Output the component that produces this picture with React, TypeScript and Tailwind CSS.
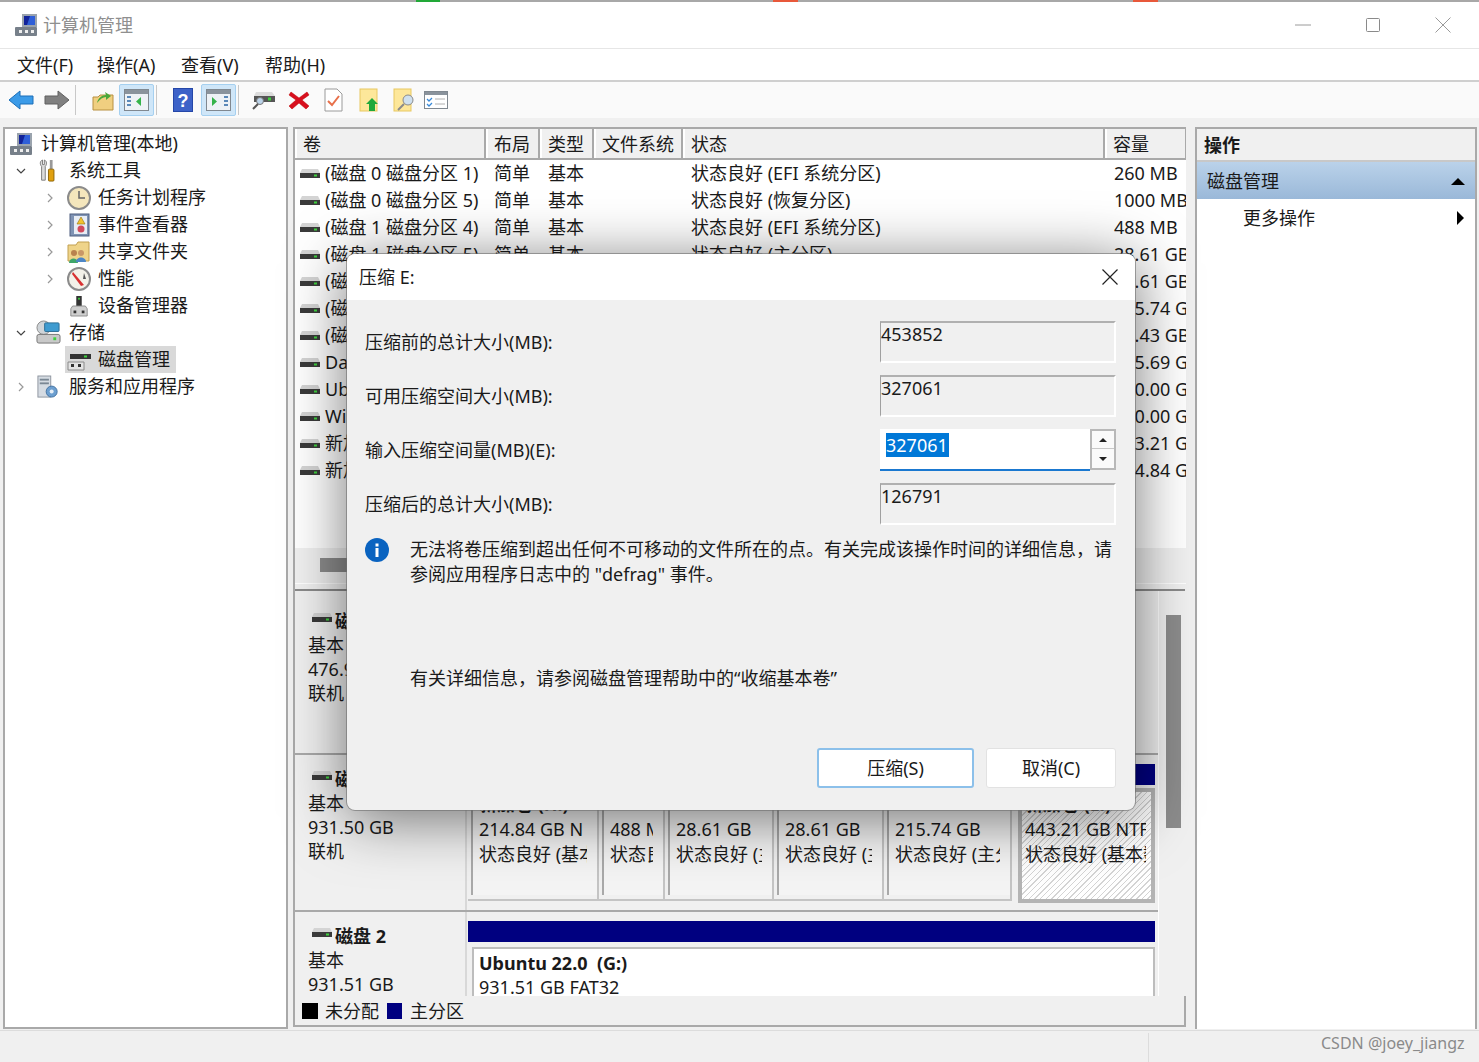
import type { ReactNode } from 'react';

const rows = [
  ['(磁盘 0 磁盘分区 1)', '状态良好 (EFI 系统分区)', '260 MB'],
  ['(磁盘 0 磁盘分区 5)', '状态良好 (恢复分区)', '1000 MB'],
  ['(磁盘 1 磁盘分区 4)', '状态良好 (EFI 系统分区)', '488 MB'],
  ['(磁盘 1 磁盘分区 5)', '状态良好 (主分区)', '28.61 GB'],
  ['(磁盘 1 磁盘分区 6)', '状态良好 (主分区)', '28.61 GB'],
  ['(磁盘 1 磁盘分区 7)', '状态良好 (主分区)', '215.74 GB'],
  ['(磁盘 0 磁盘分区 6)', '状态良好 (主分区)', '21.43 GB'],
  ['Data (D:)', '状态良好 (基本数据分区)', '175.69 GB'],
  ['Ubuntu 22.0 (G:)', '状态良好 (主分区)', '100.00 GB'],
  ['Windows (C:)', '状态良好 (启动)', '300.00 GB'],
  ['新加卷 (E:)', '状态良好 (基本数据分区)', '443.21 GB'],
  ['新加卷 (H:)', '状态良好 (基本数据分区)', '214.84 GB'],
];

const parts = [
  { w: 'w-[131px]', cap: '214.84 GB N', st: '状态良好 (基本', name: '新加卷 (H:)' },
  { w: 'w-[66px]', cap: '488 MB', st: '状态良好', name: '' },
  { w: 'w-[109px]', cap: '28.61 GB', st: '状态良好 (主', name: '' },
  { w: 'w-[110px]', cap: '28.61 GB', st: '状态良好 (主', name: '' },
  { w: 'w-[128px]', cap: '215.74 GB', st: '状态良好 (主分', name: '' },
];

function DiskIcon({ className = '' }: { className?: string }) {
  return (
    <svg viewBox="0 0 20 10" className={`w-[20px] h-[10px] shrink-0 ${className}`}>
      <path d="M2 0h16l2 4H0z" fill="#d4d4d4" />
      <rect x="0" y="4" width="20" height="5" fill="#3a3a3a" />
      <rect x="14" y="5.5" width="3" height="2" fill="#3fd13f" />
    </svg>
  );
}

function Chevron({ open }: { open?: boolean }) {
  return (
    <svg viewBox="0 0 10 10" className="w-[10px] h-[10px]" fill="none" stroke={open ? '#444' : '#999'} strokeWidth="1.2">
      <path d={open ? 'M1 3l4 4 4-4' : 'M3 1l4 4-4 4'} />
    </svg>
  );
}

function ComputerIcon() {
  return (
    <svg viewBox="0 0 24 24" className="w-[24px] h-[24px]">
      <rect x="8" y="1" width="15" height="13" fill="#9aa3ad" />
      <rect x="10" y="3" width="11" height="9" fill="#2f5fd8" />
      <path d="M10 3h6l-3 9h-3z" fill="#12239a" />
      <rect x="1" y="14" width="22" height="9" rx="1" fill="#77808a" />
      <rect x="5" y="17" width="3" height="3" fill="#eee" />
      <rect x="11" y="17" width="3" height="3" fill="#eee" />
      <rect x="17" y="17" width="3" height="3" fill="#eee" />
    </svg>
  );
}

const treeIcons: Record<string, ReactNode> = {
  tools: (
    <svg viewBox="0 0 24 26" className="w-[22px] h-[24px]">
      <path d="M6 1C3 2 3 6 5 8v15h4V8c2-2 2-6-1-7v5H6z" fill="#dcdcdc" stroke="#777" />
      <rect x="14" y="1" width="3" height="10" fill="#999" />
      <rect x="12.5" y="11" width="6" height="13" rx="1" fill="#e0a010" stroke="#8a6000" />
    </svg>
  ),
  clock: (
    <svg viewBox="0 0 24 24" className="w-[24px] h-[24px]">
      <circle cx="12" cy="12" r="11" fill="#f4e6bc" stroke="#8b8b8b" strokeWidth="2" />
      <path d="M12 5v7h6" fill="none" stroke="#666" strokeWidth="1.5" />
    </svg>
  ),
  log: (
    <svg viewBox="0 0 24 24" className="w-[24px] h-[24px]">
      <rect x="3" y="1" width="19" height="22" fill="#7f93b4" stroke="#4f5f80" />
      <rect x="7" y="3" width="13" height="18" fill="#e8edf5" />
      <path d="M14 4l4 7h-8z" fill="#f2c230" stroke="#94720c" strokeWidth=".6" />
      <circle cx="14" cy="16" r="3.5" fill="#d24a5c" />
    </svg>
  ),
  share: (
    <svg viewBox="0 0 24 24" className="w-[24px] h-[24px]">
      <path d="M1 5h8l2-3h11v19H1z" fill="#efd48a" stroke="#c2a050" />
      <circle cx="7" cy="13" r="3" fill="#b9824e" />
      <path d="M2 23c0-6 9-6 9 0z" fill="#3fa66a" />
      <circle cx="14" cy="13" r="3" fill="#c99767" />
      <path d="M9 22c0-6 10-6 10 0z" fill="#4d86c6" />
    </svg>
  ),
  perf: (
    <svg viewBox="0 0 24 24" className="w-[24px] h-[24px]">
      <circle cx="12" cy="12" r="11" fill="#f3f1e8" stroke="#8b8b8b" strokeWidth="2" />
      <path d="M6 5l11 13-3 1L5 7z" fill="#d83030" />
      <path d="M17 6l2 6h-3z" fill="#555" />
    </svg>
  ),
  device: (
    <svg viewBox="0 0 22 24" className="w-[20px] h-[22px]">
      <rect x="8" y="1" width="6" height="11" fill="#333" />
      <rect x="10" y="3" width="2" height="2" fill="#3fd13f" />
      <path d="M4 12h14l2 3v8H2v-8z" fill="#cfcfcf" stroke="#8a8a8a" />
      <rect x="5" y="17" width="3" height="3" fill="#333" />
      <rect x="14" y="17" width="3" height="3" fill="#333" />
    </svg>
  ),
  storage: (
    <svg viewBox="0 0 26 26" className="w-[25px] h-[25px]">
      <circle cx="8" cy="8" r="7" fill="#cfd4d8" stroke="#8a8a8a" />
      <rect x="9" y="3" width="15" height="9" rx="1" fill="#3e9bd0" stroke="#2b6c94" />
      <rect x="1" y="15" width="24" height="9" rx="2" fill="#c9c9c9" stroke="#777" />
      <rect x="18" y="18" width="3" height="3" fill="#3fd13f" />
    </svg>
  ),
  disk: (
    <svg viewBox="0 0 24 22" className="w-[24px] h-[22px]">
      <path d="M5 0h17l2 5H3z" fill="#d6d6d6" />
      <rect x="3" y="5" width="21" height="5" fill="#333" />
      <rect x="17" y="6.5" width="3" height="2" fill="#3fd13f" />
      <path d="M1 13h16v8H1z" fill="#e4e4e4" stroke="#8a8a8a" />
      <rect x="4" y="15" width="3" height="3" fill="#333" />
      <rect x="11" y="15" width="3" height="3" fill="#333" />
    </svg>
  ),
  service: (
    <svg viewBox="0 0 24 26" className="w-[22px] h-[24px]">
      <rect x="1" y="1" width="14" height="23" fill="#d5dbe2" stroke="#8a929c" />
      <rect x="3" y="4" width="10" height="2" fill="#7a8794" />
      <rect x="3" y="8" width="10" height="2" fill="#7a8794" />
      <circle cx="16" cy="18" r="6" fill="#6c9fd0" stroke="#3f6f9f" />
      <circle cx="16" cy="18" r="2.2" fill="#e6eef6" />
    </svg>
  ),
};

const tree = [
  { level: 0, label: '计算机管理(本地)', icon: <ComputerIcon /> },
  { level: 1, label: '系统工具', icon: treeIcons.tools, open: true },
  { level: 2, label: '任务计划程序', icon: treeIcons.clock, closed: true },
  { level: 2, label: '事件查看器', icon: treeIcons.log, closed: true },
  { level: 2, label: '共享文件夹', icon: treeIcons.share, closed: true },
  { level: 2, label: '性能', icon: treeIcons.perf, closed: true },
  { level: 2, label: '设备管理器', icon: treeIcons.device },
  { level: 1, label: '存储', icon: treeIcons.storage, open: true },
  { level: 2, label: '磁盘管理', icon: treeIcons.disk, selected: true },
  { level: 1, label: '服务和应用程序', icon: treeIcons.service, closed: true },
];

function TreePane() {
  return (
    <div className="w-[285px] h-[902px] shrink-0 border-2 border-[#a9a9a9] bg-white pt-px pl-[4px]">
      {tree.map((t) => (
        <div key={t.label} className="h-[27px] flex items-center">
          {t.level === 0 && (
            <>
              <span className="w-[28px] flex justify-start"><ComputerIcon /></span>
              <span className="ml-[4px]">{t.label}</span>
            </>
          )}
          {t.level === 1 && (
            <>
              <span className="w-[24px] flex justify-center">
                {t.open && <Chevron open />}
                {t.closed && <Chevron />}
              </span>
              <span className="w-[30px] flex justify-center">{t.icon}</span>
              <span className="ml-[6px]">{t.label}</span>
            </>
          )}
          {t.level === 2 && (
            <>
              <span className="w-[56px] pl-[36px] flex items-center">{t.closed && <Chevron />}</span>
              <span className={`flex items-center h-[27px] ${t.selected ? 'bg-[#d9d9d9] pr-[6px]' : ''}`}>
                <span className="w-[27px] flex justify-center">{t.icon}</span>
                <span className="ml-[6px]">{t.label}</span>
              </span>
            </>
          )}
        </div>
      ))}
    </div>
  );
}

function HeadCell({ w, children }: { w: string; children: ReactNode }) {
  return (
    <div className={`${w} shrink-0 h-full flex items-center pl-[6px] pt-px border-r-2 border-[#a9a9a9] border-l-2 border-l-white bg-[#f0f0f0] whitespace-nowrap`}>
      {children}
    </div>
  );
}

function VolumeTable() {
  return (
    <div className="h-[419px] overflow-hidden bg-white">
      <div className="h-[31px] flex border-b-2 border-[#a9a9a9] bg-[#f0f0f0]">
        <HeadCell w="w-[191px]">卷</HeadCell>
        <HeadCell w="w-[54px]">布局</HeadCell>
        <HeadCell w="w-[54px]">类型</HeadCell>
        <HeadCell w="w-[89px]">文件系统</HeadCell>
        <HeadCell w="w-[422px]">状态</HeadCell>
        <HeadCell w="w-[82px]">容量</HeadCell>
      </div>
      {rows.map((r) => (
        <div key={r[0]} className="h-[27px] flex items-center whitespace-nowrap">
          <div className="w-[191px] shrink-0 flex items-center pl-[5px] overflow-hidden">
            <DiskIcon className="mr-[5px]" />
            {r[0]}
          </div>
          <div className="w-[54px] shrink-0 pl-[8px]">简单</div>
          <div className="w-[54px] shrink-0 pl-[8px]">基本</div>
          <div className="w-[89px] shrink-0" />
          <div className="w-[422px] shrink-0 pl-[8px]">{r[1]}</div>
          <div className="w-[82px] shrink-0 pl-[9px] overflow-hidden">{r[2]}</div>
        </div>
      ))}
    </div>
  );
}

function Partition({ w, cap, st, name }: { w: string; cap: string; st: string; name: string }) {
  return (
    <div className={`${w} shrink-0 h-[113px] border-r-2 border-b-2 border-[#c4c4c4] pl-[3px]`}>
      <div className="h-[107px] border-l-2 border-[#a9a9a9] bg-[#f4f4f4] pl-[6px] pt-[4px] pr-[10px] overflow-hidden whitespace-nowrap leading-[25px]">
        <div className="font-bold h-[25px]">{name}</div>
        <div className="overflow-hidden">{cap}</div>
        <div className="overflow-hidden">{st}</div>
      </div>
    </div>
  );
}

function DiskLabel({ name, lines, h, pt }: { name: string; lines: string[]; h: string; pt: string }) {
  return (
    <div className={`${h} ${pt} w-[172px] shrink-0 border-r-2 border-[#d8d8d8] bg-[#f0f0f0] pl-[13px] leading-[24px] overflow-hidden`}>
      <div className="flex items-center font-bold">
        <DiskIcon className="ml-[4px] mr-[3px] mt-[-6px]" />
        {name}
      </div>
      {lines.map((l) => (
        <div key={l}>{l}</div>
      ))}
    </div>
  );
}

function DiskMap() {
  return (
    <div className="flex h-[405px] bg-[#f0f0f0]">
      <div className="w-[863px] shrink-0 overflow-hidden">
        <div className="flex h-[164px] border-b-2 border-[#a9a9a9]">
          <DiskLabel name="磁盘 0" lines={['基本', '476.94 GB', '联机']} h="h-[162px]" pt="pt-[18px]" />
        </div>
        <div className="flex h-[157px] border-b-2 border-[#a9a9a9]">
          <DiskLabel name="磁盘 1" lines={['基本', '931.50 GB', '联机']} h="h-[155px]" pt="pt-[12px]" />
          <div className="pl-px pt-[9px] min-w-0 flex-1">
            <div className="h-[21px] bg-[#000080] mr-[3px]" />
            <div className="flex mt-[3px]">
              {parts.map((p) => (
                <Partition key={p.w + p.cap} {...p} />
              ))}
              <div className="w-[137px] h-[115px] shrink-0 ml-[6px] border-[4px] border-[#b4b4b4] bg-[repeating-linear-gradient(135deg,#d4d4d4_0,#d4d4d4_1px,#ffffff_1px,#ffffff_4px)] pl-[3px] pr-[5px] whitespace-nowrap overflow-hidden leading-[25px]">
                <div className="font-bold h-[25px]">新加卷 (E:)</div>
                <div className="overflow-hidden">443.21 GB NTFS</div>
                <div className="overflow-hidden">状态良好 (基本数据分区)</div>
              </div>
            </div>
          </div>
        </div>
        <div className="flex h-[84px] overflow-hidden">
          <DiskLabel name="磁盘 2" lines={['基本', '931.51 GB']} h="h-[84px]" pt="pt-[12px]" />
          <div className="pl-px pt-[9px] flex-1 min-w-0">
            <div className="h-[21px] bg-[#000080] mr-[3px]" />
            <div className="ml-[4px] mr-[3px] mt-[5px] h-[60px] bg-white border-2 border-[#bdbdbd] border-b-0 pl-[5px] pt-[2px] leading-[24px]">
              <div className="font-bold">Ubuntu 22.0&nbsp; (G:)</div>
              <div>931.51 GB FAT32</div>
            </div>
          </div>
        </div>
      </div>
      <div className="flex-1 border-l border-white pt-[24px] pl-[7px]">
        <div className="w-[15px] h-[213px] bg-[#8c8c8c]" />
      </div>
    </div>
  );
}

function MiddlePane() {
  return (
    <div className="w-[893px] h-[900px] shrink-0 border-l-2 border-t-2 border-[#a9a9a9] flex flex-col">
      <VolumeTable />
      <div className="h-[36px] bg-[#f0f0f0] border-b border-white pt-[10px] pl-[25px]">
        <div className="w-[280px] h-[14px] bg-[#8c8c8c]" />
      </div>
      <div className="h-[7px] bg-[#f0f0f0] border-b-2 border-[#8a8a8a] mr-px" />
      <DiskMap />
      <div className="h-[31px] bg-[#f0f0f0] border-r-2 border-b-2 border-[#a9a9a9] flex items-center pl-[7px] pt-px">
        <span className="w-[16px] h-[16px] bg-black" />
        <span className="ml-[7px]">未分配</span>
        <span className="w-[15px] h-[16px] bg-[#000080] ml-[8px]" />
        <span className="ml-[8px]">主分区</span>
      </div>
    </div>
  );
}

function ActionPane() {
  return (
    <div className="w-[282px] h-[902px] shrink-0 ml-[4px] border-l-2 border-t-2 border-r-2 border-[#a9a9a9] bg-white">
      <div className="h-[33px] bg-[#f0f0f0] border-b-2 border-[#c8c8c8] flex items-center pl-[7px] pt-[2px] font-bold">操作</div>
      <div className="h-[37px] bg-gradient-to-b from-[#bad2ea] to-[#9ab8d8] flex items-center justify-between pl-[10px] pr-[10px] pt-[2px]">
        磁盘管理
        <svg viewBox="0 0 14 7" className="w-[14px] h-[7px]"><path d="M7 0l7 7H0z" fill="#000" /></svg>
      </div>
      <div className="h-[38px] flex items-center justify-between pl-[46px] pr-[11px]">
        更多操作
        <svg viewBox="0 0 7 14" className="w-[7px] h-[14px]"><path d="M0 0l7 7-7 7z" fill="#000" /></svg>
      </div>
    </div>
  );
}

function ToolIcon({ children, className = '' }: { children: ReactNode; className?: string }) {
  return <span className={`flex items-center justify-center h-[32px] shrink-0 ${className}`}>{children}</span>;
}

function Sep({ className = '' }: { className?: string }) {
  return <span className={`w-px h-[30px] bg-[#c8c8c8] shrink-0 ${className}`} />;
}

function Panes({ side }: { side: 'l' | 'r' }) {
  return (
    <svg viewBox="0 0 25 22" className="w-[25px] h-[22px]">
      <rect x="0.5" y="0.5" width="24" height="21" fill="#eef2f6" stroke="#808890" />
      <rect x="1" y="1" width="23" height="4" fill="#8a939c" />
      {side === 'l' ? (
        <>
          <path d="M3 8h4M3 12h4M3 16h4" stroke="#5a88b8" strokeWidth="2" />
          <path d="M17 8v9l-5-4.500z" fill="#34b34a" />
        </>
      ) : (
        <>
          <path d="M18 8h4M18 12h4M18 16h4" stroke="#5a88b8" strokeWidth="2" />
          <path d="M6 8v9l5-4.500z" fill="#34b34a" />
        </>
      )}
    </svg>
  );
}

function Toolbar() {
  return (
    <div className="h-[36px] bg-[#fafafa] flex items-center pl-[9px]">
      <ToolIcon className="w-[25px]">
        <svg viewBox="0 0 25 20" className="w-[25px] h-[20px]"><path d="M11 1L0 10l11 9v-5h13V6H11z" fill="#3b9be8" stroke="#1c6fb8" /></svg>
      </ToolIcon>
      <ToolIcon className="w-[25px] ml-[10px]">
        <svg viewBox="0 0 25 20" className="w-[25px] h-[20px]"><path d="M14 1l11 9-11 9v-5H1V6h13z" fill="#808080" stroke="#606060" /></svg>
      </ToolIcon>
      <Sep className="ml-[6px]" />
      <ToolIcon className="w-[22px] ml-[16px]">
        <svg viewBox="0 0 22 22" className="w-[22px] h-[22px]">
          <path d="M1 8h5l2-2h13v15H1z" fill="#f0cf80" stroke="#b89040" />
          <path d="M5 14c1-5 5-8 9-8l-1-3 6 4-5 4v-3c-3 0-6 2-9 6z" fill="#4aa83a" />
        </svg>
      </ToolIcon>
      <span className="w-[35px] h-[32px] ml-[5px] bg-[#cfe6f8] border border-[#a5d0f0] rounded-[2px] flex items-center justify-center shrink-0"><Panes side="l" /></span>
      <Sep className="ml-[2px]" />
      <ToolIcon className="w-[20px] ml-[16px]">
        <svg viewBox="0 0 20 24" className="w-[20px] h-[24px]">
          <rect width="20" height="24" fill="#2547a8" />
          <rect x="1" y="1" width="18" height="22" fill="#3d62c8" />
          <text x="10" y="19" fontSize="18" fontWeight="700" fill="#fff" textAnchor="middle" fontFamily="Liberation Sans">?</text>
        </svg>
      </ToolIcon>
      <span className="w-[35px] h-[32px] ml-[8px] bg-[#cfe6f8] border border-[#a5d0f0] rounded-[2px] flex items-center justify-center shrink-0"><Panes side="r" /></span>
      <Sep className="ml-[2px]" />
      <ToolIcon className="w-[24px] ml-[13px]">
        <svg viewBox="0 0 24 22" className="w-[24px] h-[22px]">
          <path d="M4 3h16l3 4H2z" fill="#dcdcdc" />
          <rect x="2" y="7" width="21" height="6" fill="#555" />
          <rect x="16" y="8.500" width="3" height="3" fill="#3fd13f" />
          <circle cx="8" cy="12" r="3.500" fill="#bcd4ea" stroke="#777" />
          <path d="M6 15l-5 5" stroke="#555" strokeWidth="2" />
        </svg>
      </ToolIcon>
      <ToolIcon className="w-[22px] ml-[12px]">
        <svg viewBox="0 0 22 22" className="w-[22px] h-[22px]"><path d="M3 3l8 6 8-6 2 3-7 5 7 6-3 3-7-6-7 6-3-3 7-6-7-5z" fill="#d80f1e" stroke="#b00" strokeWidth=".5" /></svg>
      </ToolIcon>
      <ToolIcon className="w-[19px] ml-[14px]">
        <svg viewBox="0 0 19 24" className="w-[19px] h-[24px]">
          <path d="M1 1h12l5 5v17H1z" fill="#fff" stroke="#9a9a9a" />
          <path d="M4 13l4 4 7-9" fill="none" stroke="#e8704a" strokeWidth="2" />
        </svg>
      </ToolIcon>
      <ToolIcon className="w-[20px] ml-[16px]">
        <svg viewBox="0 0 20 24" className="w-[20px] h-[24px]">
          <rect x="1" y="1" width="17" height="22" fill="#fde79a" stroke="#e8c860" />
          <path d="M13 10l6 6h-3v7h-6v-7H7z" fill="#1fa83a" />
        </svg>
      </ToolIcon>
      <ToolIcon className="w-[22px] ml-[14px]">
        <svg viewBox="0 0 22 24" className="w-[22px] h-[24px]">
          <rect x="1" y="1" width="17" height="22" fill="#fde79a" stroke="#e8c860" />
          <circle cx="15" cy="12" r="5" fill="#cfe0ee" stroke="#8a8a8a" />
          <path d="M11 16l-6 6" stroke="#8a8a8a" strokeWidth="2" />
        </svg>
      </ToolIcon>
      <ToolIcon className="w-[24px] ml-[9px]">
        <svg viewBox="0 0 24 18" className="w-[24px] h-[18px]">
          <rect x="0.500" y="0.500" width="23" height="17" fill="#fff" stroke="#808890" />
          <rect x="1" y="1" width="22" height="3" fill="#8a939c" />
          <path d="M3 8l2 2 3-3M3 13l2 2 3-3" fill="none" stroke="#3a8ad8" strokeWidth="1.300" />
          <path d="M11 8h10M11 13h10" stroke="#b0b0b0" />
        </svg>
      </ToolIcon>
    </div>
  );
}

function ReadField({ value }: { value: string }) {
  return (
    <div className="w-[236px] h-[42px] border-t-2 border-l border-r-2 border-b-2 border-t-[#b0b0b0] border-l-[#a0a0a0] border-r-white border-b-white leading-[23px]">{value}</div>
  );
}

function FieldRow({ label, children }: { label: string; children: ReactNode }) {
  return (
    <div className="h-[54px] flex items-center justify-between">
      <span>{label}</span>
      {children}
    </div>
  );
}

function ShrinkDialog() {
  return (
    <div className="absolute left-[347px] top-[254px] w-[788px] h-[556px] rounded-[8px] bg-[#f0f0f0] overflow-hidden shadow-[0_0_0_1px_rgba(110,110,110,0.6),0_8px_60px_rgba(0,0,0,0.55)] text-[#1a1a1a]">
      <div className="h-[46px] bg-white flex items-center justify-between pl-[12px] pr-[17px]">
        <span>压缩 E:</span>
        <svg viewBox="0 0 16 16" className="w-[16px] h-[16px]" fill="none" stroke="#222" strokeWidth="1.200">
          <path d="M.5.500l15 15M15.500.500l-15 15" />
        </svg>
      </div>
      <div className="pl-[18px] pr-[19px] pt-[15px]">
        <FieldRow label="压缩前的总计大小(MB):"><ReadField value="453852" /></FieldRow>
        <FieldRow label="可用压缩空间大小(MB):"><ReadField value="327061" /></FieldRow>
        <FieldRow label="输入压缩空间量(MB)(E):">
          <div className="w-[236px] h-[42px] flex">
            <div className="flex-1 bg-white border-b-2 border-[#1a78d0] pl-[6px] pt-[3px]">
              <span className="inline-block bg-[#0078d7] text-white leading-[24px] pr-px">327061</span>
            </div>
            <div className="w-[26px] h-[41px] border-2 border-[#b8b8b8] bg-[#f0f0f0] flex flex-col">
              <div className="h-[18px] bg-[#fafafa] border-b border-[#c8c8c8] flex items-center justify-center">
                <svg viewBox="0 0 8 4" className="w-[8px] h-[4px]"><path d="M4 0l4 4H0z" fill="#222" /></svg>
              </div>
              <div className="flex-1 bg-[#fafafa] flex items-center justify-center">
                <svg viewBox="0 0 8 4" className="w-[8px] h-[4px]"><path d="M0 0h8L4 4z" fill="#222" /></svg>
              </div>
            </div>
          </div>
        </FieldRow>
        <FieldRow label="压缩后的总计大小(MB):"><ReadField value="126791" /></FieldRow>
        <div className="flex mt-[6px]">
          <svg viewBox="0 0 24 24" className="w-[24px] h-[24px] mt-px shrink-0">
            <circle cx="12" cy="12" r="12" fill="#0a63c0" />
            <rect x="10.500" y="10" width="3" height="9" fill="#fff" />
            <rect x="10.500" y="5.500" width="3" height="3" fill="#fff" />
          </svg>
          <p className="ml-[21px] leading-[25px] whitespace-nowrap">
            无法将卷压缩到超出任何不可移动的文件所在的点。有关完成该操作时间的详细信息，请
            <br />
            参阅应用程序日志中的 "defrag" 事件。
          </p>
        </div>
        <p className="ml-[45px] mt-[79px] leading-[25px]">有关详细信息，请参阅磁盘管理帮助中的“收缩基本卷”</p>
        <div className="flex justify-end gap-[12px] mt-[57px]">
          <button className="w-[157px] h-[40px] bg-white border-2 border-[#8cc0ea] rounded-[3px]">压缩(S)</button>
          <button className="w-[130px] h-[40px] bg-white border border-[#e2e2e2] rounded-[3px]">取消(C)</button>
        </div>
      </div>
    </div>
  );
}

export default function App() {
  return (
    <div className="relative w-[1479px] h-[1062px] overflow-hidden bg-[#f0f0f0] text-[18px] text-[#1a1a1a] font-['Noto_Sans','Noto_Sans_CJK_SC',sans-serif]">
      <div className="h-[2px] bg-[#a8a8a8] flex">
        <span className="w-[24px] ml-[416px] bg-[#22a838]" />
        <span className="w-[25px] ml-[333px] bg-[#e8583a]" />
        <span className="w-[25px] ml-[335px] bg-[#e8583a]" />
      </div>
      <div className="h-[47px] bg-white border-b border-[#e6e6e6] flex items-center justify-between pl-[14px] pr-[28px]">
        <div className="flex items-center">
          <ComputerIcon />
          <span className="ml-[5px] text-[#8f8f8f]">计算机管理</span>
        </div>
        <div className="flex items-center gap-[54px]">
          <svg viewBox="0 0 16 16" className="w-[16px] h-[16px]" fill="none" stroke="#9a9a9a"><path d="M0 8h16" /></svg>
          <svg viewBox="0 0 16 16" className="w-[16px] h-[16px]" fill="none" stroke="#8a8a8a"><rect x="1.500" y="1.500" width="13" height="13" rx="1" /></svg>
          <svg viewBox="0 0 16 16" className="w-[16px] h-[16px]" fill="none" stroke="#9a9a9a"><path d="M.5.500l15 15M15.500.500l-15 15" /></svg>
        </div>
      </div>
      <div className="h-[33px] bg-white border-b-2 border-[#cfcfcf] flex items-center pl-[17px] pt-px">
        <span className="w-[80px]">文件(F)</span>
        <span className="w-[84px]">操作(A)</span>
        <span className="w-[84px]">查看(V)</span>
        <span>帮助(H)</span>
      </div>
      <Toolbar />
      <div className="flex pl-[3px] pt-[9px] gap-[5px]">
        <TreePane />
        <MiddlePane />
        <ActionPane />
      </div>
      <div className="absolute left-0 right-0 bottom-0 h-[32px] border-t border-[#dcdcdc]">
        <div className="absolute left-[1148px] top-[2px] bottom-0 w-px bg-[#dcdcdc]" />
      </div>
      <span className="absolute left-[1321px] top-[1031px] text-[16px] text-[#8a8a8a]">CSDN @joey_jiangz</span>
      <ShrinkDialog />
    </div>
  );
}
